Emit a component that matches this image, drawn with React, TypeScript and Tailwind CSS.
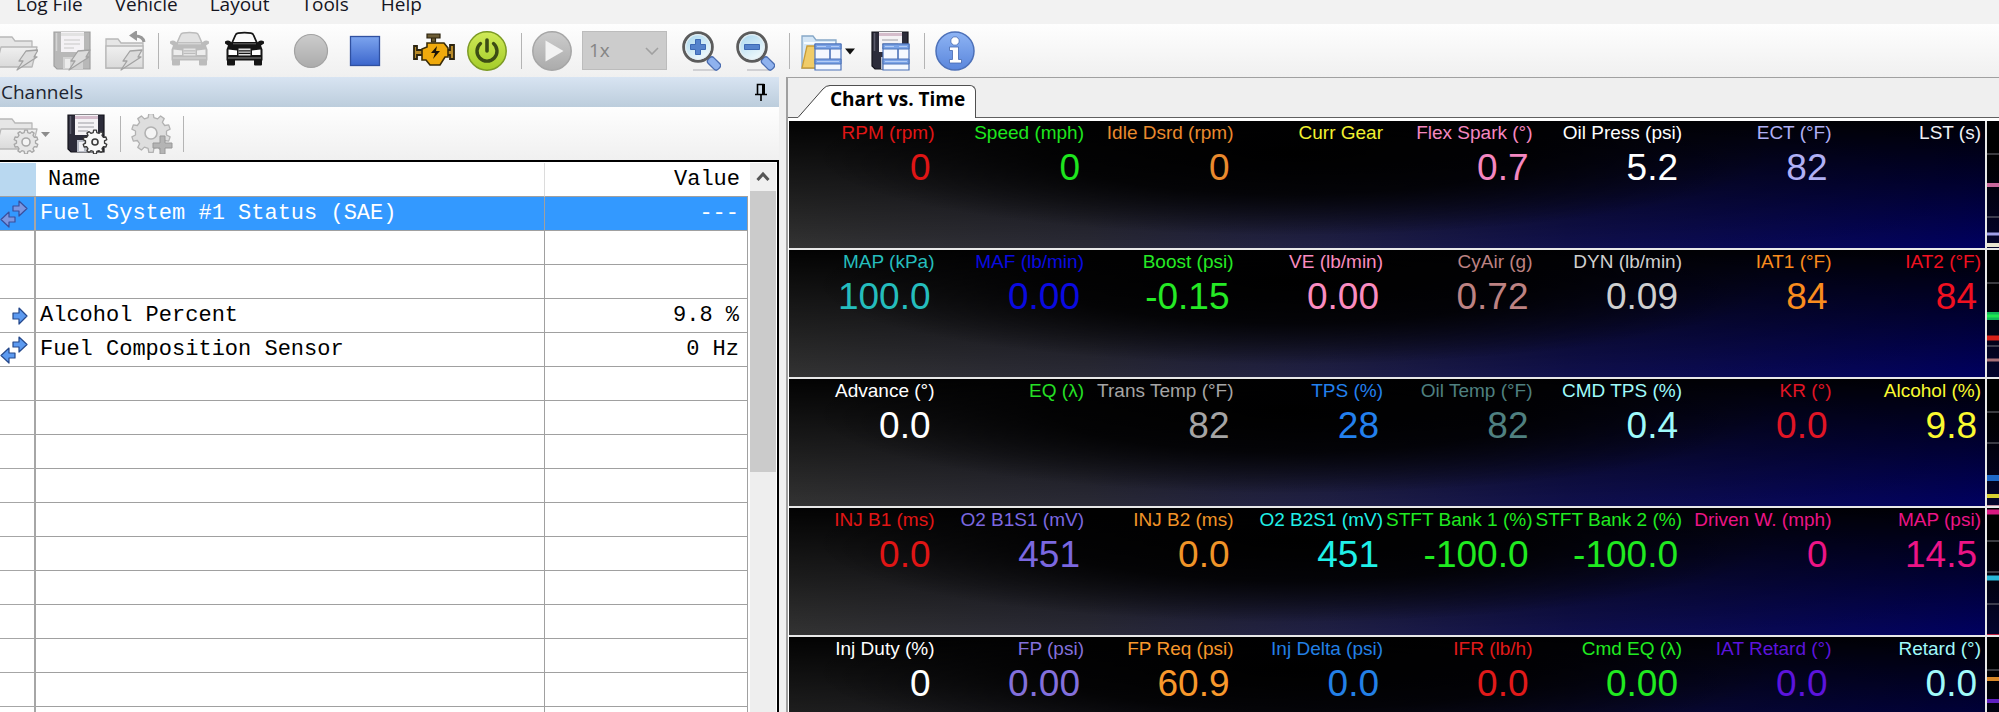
import React from "react";

type Reading = { label: string; value: string; tone: string };

const r = (label: string, value: string, tone: string): Reading => ({ label, value, tone });

const readings: Reading[][] = [
  [
    r("RPM (rpm)", "0", "text-[#e01515]"),
    r("Speed (mph)", "0", "text-[#1ee61e]"),
    r("Idle Dsrd (rpm)", "0", "text-[#ea8a2e]"),
    r("Curr Gear", "", "text-[#f2f230]"),
    r("Flex Spark (°)", "0.7", "text-[#f587c0]"),
    r("Oil Press (psi)", "5.2", "text-white"),
    r("ECT (°F)", "82", "text-[#b0b0f5]"),
    r("LST (s)", "", "text-[#f0f0f5]"),
  ],
  [
    r("MAP (kPa)", "100.0", "text-[#25bdbd]"),
    r("MAF (lb/min)", "0.00", "text-[#0a0ae0]"),
    r("Boost (psi)", "-0.15", "text-[#25ea25]"),
    r("VE (lb/min)", "0.00", "text-[#fa8cc0]"),
    r("CyAir (g)", "0.72", "text-[#bd8282]"),
    r("DYN (lb/min)", "0.09", "text-[#cfcfcf]"),
    r("IAT1 (°F)", "84", "text-[#fa8c1e]"),
    r("IAT2 (°F)", "84", "text-[#f01020]"),
  ],
  [
    r("Advance (°)", "0.0", "text-white"),
    r("EQ (λ)", "", "text-[#25e025]"),
    r("Trans Temp (°F)", "82", "text-[#a5a5a5]"),
    r("TPS (%)", "28", "text-[#2380ee]"),
    r("Oil Temp (°F)", "82", "text-[#4f8080]"),
    r("CMD TPS (%)", "0.4", "text-[#9ffafa]"),
    r("KR (°)", "0.0", "text-[#e01525]"),
    r("Alcohol (%)", "9.8", "text-[#fafa30]"),
  ],
  [
    r("INJ B1 (ms)", "0.0", "text-[#e01515]"),
    r("O2 B1S1 (mV)", "451", "text-[#7b68e0]"),
    r("INJ B2 (ms)", "0.0", "text-[#f09428]"),
    r("O2 B2S1 (mV)", "451", "text-[#20f0e8]"),
    r("STFT Bank 1 (%)", "-100.0", "text-[#20ea20]"),
    r("STFT Bank 2 (%)", "-100.0", "text-[#20ea20]"),
    r("Driven W. (mph)", "0", "text-[#ec1486]"),
    r("MAP (psi)", "14.5", "text-[#ec1486]"),
  ],
  [
    r("Inj Duty (%)", "0", "text-white"),
    r("FP (psi)", "0.00", "text-[#8370dc]"),
    r("FP Req (psi)", "60.9", "text-[#f8982c]"),
    r("Inj Delta (psi)", "0.0", "text-[#2380e6]"),
    r("IFR (lb/h)", "0.0", "text-[#e01a1a]"),
    r("Cmd EQ (λ)", "0.00", "text-[#20ea20]"),
    r("IAT Retard (°)", "0.0", "text-[#5c14dc]"),
    r("Retard (°)", "0.0", "text-[#a0fafa]"),
  ],
];

/* Traces at the left edge of each plot: [centre, thickness, colour] */
const traces: [number, number, string][][] = [
  [[33, 1, "#77777f"], [96, 1, "#77777f"], [64, 4, "#c8689c"], [113, 3, "#a0a0e8"], [124, 4, "#e8e4d0"]],
  [[33, 1, "#77777f"], [96, 1, "#77777f"], [66, 8, "#10b858"], [66, 3, "#20e850"], [88, 5, "#d82018"], [110, 3, "#a87078"]],
  [[33, 1, "#77777f"], [64, 1, "#77777f"], [99, 6, "#1e68c8"], [117, 4, "#d8d030"], [127, 2, "#c090a0"]],
  [[4, 5, "#d81880"], [33, 1, "#77777f"], [64, 1, "#77777f"], [70, 5, "#28b8d8"], [96, 1, "#77777f"], [127, 2, "#c02040"]],
  [[33, 1, "#77777f"], [42, 4, "#d88828"], [64, 4, "#6020c0"]],
];

type Channel = { name: string; value: string; dir?: "in" | "both"; selected?: boolean };

const channels: Channel[] = [
  { name: "Fuel System #1 Status (SAE)", value: "---", dir: "both", selected: true },
  { name: "", value: "" },
  { name: "", value: "" },
  { name: "Alcohol Percent", value: "9.8 %", dir: "in" },
  { name: "Fuel Composition Sensor", value: "0 Hz", dir: "both" },
  ...Array.from({ length: 11 }, () => ({ name: "", value: "" })),
];

function Svg({ children, w = 40 }: { children: React.ReactNode; w?: number }) {
  return (
    <svg width={w} height={40} viewBox={`0 0 ${w} 40`} fill="none" aria-hidden="true" className="block">
      {children}
    </svg>
  );
}

function Tool({ label, className = "", children, disabled }: { label: string; className?: string; children: React.ReactNode; disabled?: boolean }) {
  return (
    <button type="button" aria-label={label} disabled={disabled} className={`shrink-0 ${className}`}>
      {children}
    </button>
  );
}

function Sep({ className = "" }: { className?: string }) {
  return <div className={`h-9 w-px shrink-0 bg-[#b4b4b4] ${className}`} />;
}

const Bolt = () => (
  <path d="M26 20l12-1-4 7h3L17 39l6-9h-4z" fill="#dcdcdc" stroke="#a2a2a2" strokeWidth="1.3" strokeLinejoin="round" />
);

function Gear({ cx, cy, ro, fill, stroke, hole }: { cx: number; cy: number; ro: number; fill: string; stroke: string; hole: number }) {
  const teeth = 10;
  const pts: string[] = [];
  for (let i = 0; i < teeth; i++) {
    [[-0.3, 0.8], [-0.18, 1], [0.18, 1], [0.3, 0.8]].forEach(([t, k]) => {
      const a = ((i + t) / teeth) * Math.PI * 2;
      pts.push(`${(cx + Math.sin(a) * ro * k).toFixed(1)},${(cy - Math.cos(a) * ro * k).toFixed(1)}`);
    });
  }
  return (
    <>
      <polygon points={pts.join(" ")} fill={fill} stroke={stroke} strokeWidth="1.3" strokeLinejoin="round" />
      <circle cx={cx} cy={cy} r={hole} fill="#f4f4f4" stroke={stroke} strokeWidth="1.6" />
    </>
  );
}

function FolderIcon({ x = 0, y = 0 }: { x?: number; y?: number }) {
  return (
    <g transform={`translate(${x} ${y})`} stroke="#b8b8b8" strokeWidth="1.3" strokeLinejoin="round">
      <path d="M-1 30V1h13l3 4h17v25z" fill="#e6e6e6" />
      <path d="M1 11h36l-5 20H-4z" fill="url(#folderGrey)" />
    </g>
  );
}

function Floppy({ grey = false }: { grey?: boolean }) {
  const c = grey ? "#b8b8b8" : "#2c2c3a";
  return (
    <>
      <path d="M2 1h36v37H5l-3-3z" fill={c} stroke={grey ? "#a0a0a0" : "#14141c"} strokeWidth="1.2" />
      <path d="M4.500 2v18" stroke={grey ? "#d4d4d4" : "#5a5a6a"} strokeWidth="1.5" />
      <path d="M9 1h23v20H9z" fill="#f4f2f5" />
      <path d="M9 2h23v3H9z" fill={grey ? "#e2e2e2" : "#d4bccb"} />
      <path d="M12 9h16M12 13h16M12 17h10" stroke={grey ? "#c8c8c8" : "#9c9ca4"} strokeWidth="1.2" />
      <path d="M11 26h20v12H11z" fill={grey ? "#d2d2d2" : "#b8bcc6"} />
      <path d="M13 28h5v9h-5z" fill={grey ? "#ececec" : "#f2f2f6"} />
    </>
  );
}

function Car({ grey = false }: { grey?: boolean }) {
  const c = grey ? "#bcbcbc" : "#151515";
  return (
    <Svg w={41}>
      <path d="M3 25h8v8.500a1 1 0 0 1-1 1H4a1 1 0 0 1-1-1zM30 25h8v8.500a1 1 0 0 1-1 1h-6a1 1 0 0 1-1-1z" fill={c} />
      <path d="M8 12L11.500 4q.6-1.600 2.600-1.900 6.400-1 12.800 0 2 .3 2.600 1.900L33 12z" fill={grey ? "#e2e2e2" : "#fafafa"} stroke={c} strokeWidth={grey ? 1.5 : 1.8} />
      <path d="M1 10.500q3-2 5.500 0l1.500 1h25l1.500-1q2.500-2 5.500 0v2l-3 2 1.500 4V29.500H2.500v-11l1.500-4-3-2z" fill={c} />
      <path d="M9 12.800h23" stroke={grey ? "#dedede" : "#6a6a6a"} strokeWidth="1" />
      <path d="M4.500 18.500l8.500 1v4.500H4.500zM36.500 18.500l-8.500 1v4.500h8.500z" fill={grey ? "#ededed" : "#ffffff"} />
      <path d="M14.500 17.500h12v7h-12z" fill={grey ? "#e4e4e4" : "#e0e0e0"} />
      <path d="M14.500 19.800h12M14.500 22.300h12" stroke={c} strokeWidth="1.300" />
      <path d="M4 27h33" stroke={grey ? "#d8d8d8" : "#8a8a8a"} strokeWidth="1" />
    </Svg>
  );
}

function Magnifier({ plus = false }: { plus?: boolean }) {
  return (
    <Svg>
      <path d="M12 39h22" stroke="#c4c4c8" strokeWidth="1.500" />
      <path d="M25 25l4 4" stroke="#8a8a8a" strokeWidth="3" />
      <rect x="26" y="28.500" width="14" height="8" rx="3" transform="rotate(45 33 32.500)" fill="#8fb2ee" stroke="#4a6cb0" strokeWidth="1.300" />
      <circle cx="17" cy="16" r="14.300" fill="url(#lens)" stroke="#5c5c5c" strokeWidth="3" />
      <circle cx="17" cy="16" r="12.300" stroke="#e4eef2" strokeWidth="1.200" />
      <path d={plus ? "M14.500 8.500h5v5h5v5h-5v5h-5v-5h-5v-5h5z" : "M9.500 13.500h15v5h-15z"} fill="#5583cc" stroke="#3d69b4" strokeWidth="1" />
    </Svg>
  );
}

function Sheet({ x, y }: { x: number; y: number }) {
  return (
    <g transform={`translate(${x} ${y})`}>
      <path d="M0 0h26v26H0z" fill="#f4f8ff" stroke="#4c72b8" strokeWidth="1.200" />
      <path d="M0 0h26v5H0zM0 15h26v5H0z" fill="#7ba3e6" stroke="#4c72b8" strokeWidth="1" />
      <path d="M15 5v10" stroke="#4c72b8" strokeWidth="1.600" />
      <path d="M2 2.500h9M16 2.500h8M2 17.500h22" stroke="#b4cdf6" strokeWidth="1" />
    </g>
  );
}

function Defs() {
  return (
    <svg width="0" height="0" className="absolute" aria-hidden="true">
      <defs>
        <linearGradient id="folderGrey" x1="0" y1="0" x2="0" y2="1">
          <stop offset="0" stopColor="#f0f0f0" />
          <stop offset="1" stopColor="#dadada" />
        </linearGradient>
        <linearGradient id="greyDisc" x1="0" y1="0" x2="0" y2="1">
          <stop offset="0" stopColor="#cccccc" />
          <stop offset="1" stopColor="#ababab" />
        </linearGradient>
        <linearGradient id="blueBox" x1="0" y1="0" x2="0" y2="1">
          <stop offset="0" stopColor="#7ca4ee" />
          <stop offset="1" stopColor="#3c66cc" />
        </linearGradient>
        <linearGradient id="limeDisc" x1="0" y1="0" x2="0" y2="1">
          <stop offset="0" stopColor="#d0ea58" />
          <stop offset="1" stopColor="#a4cc28" />
        </linearGradient>
        <linearGradient id="infoDisc" x1="0" y1="0" x2="0" y2="1">
          <stop offset="0" stopColor="#8eb4f4" />
          <stop offset="1" stopColor="#5a86dc" />
        </linearGradient>
        <linearGradient id="lens" x1="0" y1="0" x2="0.6" y2="1">
          <stop offset="0" stopColor="#a4d4ee" />
          <stop offset="1" stopColor="#f0fafc" />
        </linearGradient>
      </defs>
    </svg>
  );
}

function Toolbar() {
  return (
    <div role="toolbar" aria-label="Main" className="flex h-[53px] shrink-0 items-center overflow-hidden bg-linear-to-b from-[#fefefe] to-[#f0f0f0]">
      <Tool label="Open log" disabled>
        <Svg w={38}><FolderIcon y={5} /><Bolt /></Svg>
      </Tool>
      <Tool label="Save log" className="ml-3.5" disabled>
        <Svg><Floppy grey /><Bolt /></Svg>
      </Tool>
      <Tool label="Reload log" className="ml-3" disabled>
        <Svg w={42}>
          <path d="M2 37V8h12l3 4h22v25z" fill="#e6e6e6" stroke="#b8b8b8" strokeWidth="1.300" />
          <path d="M2 37V15h37v22z" fill="url(#folderGrey)" stroke="#b8b8b8" strokeWidth="1.300" />
          <path d="M40 11Q39 5 31 5" stroke="#989898" strokeWidth="3" />
          <path d="M33-1v11l-8-5.500z" fill="#989898" />
          <Bolt />
        </Svg>
      </Tool>
      <Sep className="ml-3" />
      <Tool label="Disconnect vehicle" className="ml-2.5" disabled><Car grey /></Tool>
      <Tool label="Connect vehicle" className="ml-3.5"><Car /></Tool>
      <Tool label="Record" className="ml-6.5" disabled>
        <Svg><circle cx="20" cy="20" r="16.500" fill="url(#greyDisc)" stroke="#a2a2a2" strokeWidth="1.200" /></Svg>
      </Tool>
      <Tool label="Stop" className="ml-3.5">
        <Svg><rect x="5.500" y="5.500" width="29" height="29" fill="url(#blueBox)" stroke="#3050a0" strokeWidth="1.300" /></Svg>
      </Tool>
      <Tool label="Engine codes" className="ml-7">
        <Svg w={42}>
          <path d="M14 3h13v4H14zM18.500 7h4v4h-4z" fill="#6c5c34" stroke="#2c2410" strokeWidth="1.200" />
          <path d="M9 24H4v4H1V15h3v4h5M33 24h4v4h4V14h-4v5h-4" fill="#b88a28" stroke="#2c2410" strokeWidth="1.800" />
          <path d="M14 12h17l4 5v9h-3l-5 8H17l-4-5H9V18l5-2z" fill="#f0aa0c" stroke="#3a2c08" strokeWidth="1.600" />
          <path d="M24 15l-6 7h4l-2 6 7-8h-4z" fill="#1c1408" />
        </Svg>
      </Tool>
      <Tool label="Power" className="ml-3">
        <Svg>
          <circle cx="20" cy="20" r="19.200" fill="url(#limeDisc)" stroke="#7c9a24" strokeWidth="1.500" />
          <path d="M13.500 12.500a10 10 0 1 0 13 0" stroke="#3c4c14" strokeWidth="3.400" strokeLinecap="round" />
          <path d="M20 9v11" stroke="#3c4c14" strokeWidth="3.600" strokeLinecap="round" />
        </Svg>
      </Tool>
      <Sep className="ml-3.5" />
      <Tool label="Play" className="ml-2.5" disabled>
        <Svg>
          <circle cx="20" cy="20" r="19.200" fill="url(#greyDisc)" stroke="#a6a6a6" strokeWidth="1.500" />
          <path d="M13.500 9.500v21L31.500 20z" fill="#f2f2f2" />
        </Svg>
      </Tool>
      <div className="relative ml-2.5 h-[39px] w-[85px] shrink-0">
        <select aria-label="Playback speed" disabled className="h-full w-full appearance-none rounded-none border border-[#bcbcbc] bg-[#cccccc] pl-1.5 text-[19px] text-[#858585] opacity-100">
          <option>1x</option>
        </select>
        <svg width="14" height="8" viewBox="0 0 14 8" fill="none" aria-hidden="true" className="pointer-events-none absolute top-4 right-2">
          <path d="M1 1l6 6 6-6" stroke="#a0a0a0" strokeWidth="1.600" />
        </svg>
      </div>
      <Tool label="Zoom in" className="ml-3.5"><Magnifier plus /></Tool>
      <Tool label="Zoom out" className="ml-3.5"><Magnifier /></Tool>
      <Sep className="ml-3.5" />
      <Tool label="Open layout" className="ml-2.5">
        <Svg w={56}>
          <path d="M2 37V5h11l3 4h20v28z" fill="#d4e6f6" stroke="#86a8c8" strokeWidth="1.300" />
          <path d="M4 12h31" stroke="#f6fbff" strokeWidth="2" />
          <path d="M7 15h29v22H2z" fill="#f0cc68" stroke="#c89c38" strokeWidth="1.300" />
          <Sheet x={15} y={13} />
          <path d="M45 17.500h10l-5 6z" fill="#111111" />
        </Svg>
      </Tool>
      <Tool label="Save layout" className="ml-3.5">
        <Svg><Floppy /><Sheet x={13} y={13} /></Svg>
      </Tool>
      <Sep className="ml-3.5" />
      <Tool label="Information" className="ml-2.5">
        <Svg>
          <circle cx="20" cy="20" r="19" fill="url(#infoDisc)" stroke="#4c70b8" strokeWidth="1.500" />
          <circle cx="20" cy="10" r="4.200" fill="#ffffff" stroke="#4468b0" strokeWidth="0.800" />
          <path d="M14.500 16h9v12.500h3V32h-12v-3.500h3v-9h-3z" fill="#ffffff" stroke="#4468b0" strokeWidth="0.800" />
        </Svg>
      </Tool>
    </div>
  );
}

function Arrows({ dir, selected }: { dir: "in" | "both"; selected?: boolean }) {
  const fill = selected ? "#7c96e0" : "#5c9af0";
  const stroke = selected ? "#3a4f9c" : "#24488c";
  return (
    <svg width="28" height="28" viewBox="0 0 28 28" fill={fill} stroke={stroke} strokeWidth="1.200" strokeLinejoin="round" aria-hidden="true" className="block">
      {dir === "in" ? (
        <path d="M13 11h6V6l8 8-8 8v-5h-6z" />
      ) : (
        <>
          <path d="M13 6h6V1l8 7.500-8 7.500v-5h-6z" />
          <path d="M15 17H9v-5L1 19.500 9 27v-5h6z" />
        </>
      )}
    </svg>
  );
}

function ChannelsPane() {
  return (
    <section aria-label="Channels" className="flex w-[779px] shrink-0 flex-col">
      <div className="flex h-[30px] shrink-0 items-center justify-between bg-linear-to-b from-[#d8e4f2] to-[#bccddc] pr-3 pl-px">
        <h2 className="text-[19px] leading-7 text-[#1c2430]">Channels</h2>
        <button type="button" aria-label="Pin pane">
          <svg width="12" height="18" viewBox="0 0 12 18" fill="none" stroke="#000000" aria-hidden="true" className="block">
            <path d="M2.500 11V1.500h6V11M0 11.500h12M6 12v6" strokeWidth="1.600" />
            <path d="M8.500 1v10" strokeWidth="3" />
          </svg>
        </button>
      </div>
      <div role="toolbar" aria-label="Channels" className="flex h-[53px] shrink-0 items-center overflow-hidden bg-linear-to-b from-[#fefefe] to-[#f0f0f0]">
        <Tool label="Open channels" disabled>
          <Svg w={52}>
            <FolderIcon y={4} />
            <Gear cx={26} cy={28} ro={12} fill="#e6e6e6" stroke="#a8a8a8" hole={4} />
            <path d="M41 18h9l-4.500 5z" fill="#8c8c8c" />
          </Svg>
        </Tool>
        <Tool label="Save channels" className="ml-3.5">
          <Svg w={42}>
            <Floppy />
            <Gear cx={29} cy={28} ro={12} fill="#f8f8f8" stroke="#3a3a3a" hole={3} />
          </Svg>
        </Tool>
        <Sep className="ml-3" />
        <Tool label="Add channel" className="ml-2.5" disabled>
          <Svg w={42}>
            <Gear cx={20} cy={19} ro={19.500} fill="#dedede" stroke="#b2b2b2" hole={6} />
            <path d="M29 22h5v7h7v5h-7v6h-5v-6h-7v-5h7z" fill="#b4b4b4" stroke="#989898" strokeWidth="1" />
          </Svg>
        </Tool>
        <Sep className="ml-2.5" />
      </div>
      <div className="flex min-h-0 flex-1 overflow-hidden border-t-2 border-r-2 border-black bg-white pt-px">
        <div className="min-w-0 flex-1">
          <table className="w-full table-fixed border-separate border-spacing-0 font-['Liberation_Mono',monospace] text-[22px] leading-8">
            <colgroup>
              <col className="w-9" />
              <col />
              <col className="w-[203px]" />
            </colgroup>
            <thead>
              <tr className="h-[34px]">
                <th aria-label="Direction" className="border-b border-[#a0a0a0] bg-[#b9d8f0] p-0" />
                <th className="border-r border-b border-r-[#dcdcdc] border-b-[#a0a0a0] p-0 pl-3 text-left font-normal">Name</th>
                <th className="border-b border-[#a0a0a0] p-0 pr-2 text-right font-normal">Value</th>
              </tr>
            </thead>
            <tbody>
              {channels.map((c, i) => (
                <tr key={i} className={c.selected ? "h-[34px] bg-[#3399ff] text-white" : "h-[34px] text-black"}>
                  <td className="border-r-2 border-b border-[#a6a6a6] p-0">{c.dir && <Arrows dir={c.dir} selected={c.selected} />}</td>
                  <td className="border-r border-b border-[#a0a0a0] p-0 pl-1">{c.name}</td>
                  <td className="border-r border-b border-[#a0a0a0] p-0 pr-2 text-right">{c.value}</td>
                </tr>
              ))}
            </tbody>
          </table>
        </div>
        <div className="flex w-[29px] shrink-0 flex-col pr-px pl-0.5">
          <button type="button" aria-label="Scroll up" className="flex h-7 shrink-0 items-center justify-center bg-[#f0f0f0]">
            <svg width="14" height="12" viewBox="0 0 14 12" fill="none" aria-hidden="true">
              <path d="M1.500 9L7 3l5.500 6" stroke="#555555" strokeWidth="3" />
            </svg>
          </button>
          <div className="h-[281px] shrink-0 bg-[#cbcbcb]" />
          <div className="flex-1 bg-[#eeeeee]" />
        </div>
      </div>
    </section>
  );
}

function ReadingRow({ items, lines }: { items: Reading[]; lines: [number, number, string][] }) {
  return (
    <div className="flex h-[129px] shrink-0 border-b-2 border-[#e8e8e8]">
      <dl className="grid min-w-0 flex-1 grid-cols-8 border-r-2 border-[#e8e8e8] bg-[radial-gradient(ellipse_40%_65%_at_42%_25%,#000000_0%,rgba(0,0,0,0.8)_50%,transparent_100%),linear-gradient(to_bottom,rgba(0,0,0,0.95)_0%,rgba(0,0,0,0.45)_55%,transparent_100%),linear-gradient(to_right,#333333_0%,#2a2a36_25%,#202046_45%,#10104c_65%,#000060_100%)]">
        {items.map((m) => (
          <div key={m.label} className={`text-right whitespace-nowrap ${m.tone}`}>
            <dt className="flex justify-end pr-1 text-[19px] leading-6">{m.label}</dt>
            <dd className="pr-2 text-[37px] leading-[46px]">{m.value}</dd>
          </div>
        ))}
      </dl>
      <svg width="12" height="127" viewBox="0 0 12 127" aria-hidden="true" className="shrink-0 bg-linear-to-b from-black to-[#05052e]">
        {lines.map(([y, h, c], i) => (
          <rect key={i} x="0" y={y - h / 2} width="12" height={h} fill={c} />
        ))}
      </svg>
    </div>
  );
}

function ChartPane() {
  return (
    <section aria-label="Chart vs. Time" className="ml-[7px] flex min-w-0 flex-1 flex-col border-t border-l-2 border-[#a0a0a0] bg-[#efefef] font-['Liberation_Sans',Arial,sans-serif]">
      <div role="tablist" className="flex h-10 shrink-0 items-end">
        <div className="w-2.5 border-b border-[#606060]" />
        <svg width="32" height="33" viewBox="0 0 32 33" aria-hidden="true" className="shrink-0">
          <path d="M0 32.500L25 4Q28 .5 32 .5V33H0z" fill="#ffffff" />
          <path d="M0 32.500L25 4Q28 .5 32 .5" fill="none" stroke="#404040" />
        </svg>
        <button type="button" role="tab" aria-selected="true" className="h-[33px] shrink-0 rounded-tr-md border-t border-r border-[#505050] bg-white pr-2.5 pb-1.5 font-['Open_Sans','Noto_Sans',sans-serif] text-[19px] leading-6 font-bold text-black">
          Chart vs. Time
        </button>
        <div className="flex-1 border-b border-[#606060]" />
      </div>
      <div className="flex min-h-0 flex-1 flex-col overflow-hidden border-t-3 border-l border-white bg-black">
        {readings.map((items, i) => (
          <ReadingRow key={i} items={items} lines={traces[i]} />
        ))}
      </div>
    </section>
  );
}

export default function App() {
  return (
    <div className="flex h-screen flex-col overflow-hidden bg-[#f0f0f0] font-['Open_Sans','Noto_Sans',sans-serif]">
      <Defs />
      <nav aria-label="Menu" className="flex h-6 shrink-0 items-start gap-8 bg-[#f2f2f2] pl-4 text-[19px] leading-2 text-[#15151f]">
        {["Log File", "Vehicle", "Layout", "Tools", "Help"].map((m) => (
          <a key={m} href="#">{m}</a>
        ))}
      </nav>
      <Toolbar />
      <div className="flex min-h-0 flex-1">
        <ChannelsPane />
        <ChartPane />
      </div>
    </div>
  );
}
